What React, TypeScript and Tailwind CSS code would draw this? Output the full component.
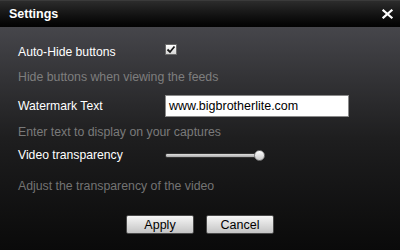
import React from "react";

export default function App() {
  return (
    <div
      className="w-[400px] h-[250px] overflow-hidden flex flex-col text-[12px] leading-[14px] text-white"
      style={{ fontFamily: '"Liberation Sans", Arial, sans-serif' }}
    >
      <div className="h-[27px] shrink-0 flex items-center justify-between pl-[9px] pr-[7px] border-t border-[#3a3a3a] bg-gradient-to-b from-[#2c2c2c] to-[#030303]">
        <span className="font-bold text-[12.5px] text-white">Settings</span>
        <svg width="11" height="10" viewBox="0 0 11 10" className="mt-[-1px]">
          <path d="M1.5 1.5 L9.5 8.5 M9.5 1.5 L1.5 8.5" stroke="#ffffff" strokeWidth="2.2" strokeLinecap="square" />
        </svg>
      </div>
      <div className="flex-1 flex flex-col bg-gradient-to-b from-[#46464b] via-[#1e1e1f] to-[#0a0a0a]">
        <div className="mt-[18px] pl-[18px] flex items-start">
          <span className="w-[147px] text-[12.2px]">Auto-Hide buttons</span>
          <div className="mt-[-1px] w-[12px] h-[11px] border border-[#6a6a6a] bg-gradient-to-b from-[#ffffff] to-[#d6d6d6] flex items-center justify-center">
            <svg width="10" height="9" viewBox="0 0 10 9">
              <path d="M1.5 4.5 L4 7 L8.5 1.5" stroke="#1a1a1a" strokeWidth="1.8" fill="none" />
            </svg>
          </div>
        </div>
        <div className="mt-[11px] pl-[18px] text-[#7e7e7e] text-[12.3px]">Hide buttons when viewing the feeds</div>
        <div className="mt-[11px] pl-[18px] flex items-center h-[22px]">
          <span className="w-[147px] text-[12.2px]">Watermark Text</span>
          <div className="w-[184px] h-[22px] bg-white border border-[#8a8a8a] flex items-center pl-[3px] text-black text-[12.5px]">
            www.bigbrotherlite.com
          </div>
        </div>
        <div className="mt-[8px] pl-[18px] text-[#7a7a7a] text-[12.3px]">Enter text to display on your captures</div>
        <div className="mt-[9px] pl-[18px] flex items-center h-[14px]">
          <span className="w-[147px] text-[12.2px]">Video transparency</span>
          <div className="relative w-[101px] h-[12px] flex items-center">
            <div className="w-[96px] h-[5px] rounded-[2px] border border-[#333] bg-gradient-to-b from-[#e0e0e0] to-[#a8a8a8]" />
            <div className="absolute left-[89px] top-[1px] w-[11px] h-[11px] rounded-full bg-gradient-to-b from-[#ffffff] to-[#c8c8c8] border border-[#777]" />
          </div>
        </div>
        <div className="mt-[17px] pl-[18px] text-[#737373] text-[12.3px]">Adjust the transparency of the video</div>
        <div className="mt-[22px] flex justify-center gap-[12px]">
          <button className="w-[68px] h-[19px] rounded-[2px] border border-[#4a4a4a] bg-gradient-to-b from-[#f6f6f6] to-[#c4c4c4] text-black text-[12.5px] leading-[14px]">
            Apply
          </button>
          <button className="w-[68px] h-[19px] rounded-[2px] border border-[#4a4a4a] bg-gradient-to-b from-[#f6f6f6] to-[#c4c4c4] text-black text-[12.5px] leading-[14px]">
            Cancel
          </button>
        </div>
      </div>
    </div>
  );
}
